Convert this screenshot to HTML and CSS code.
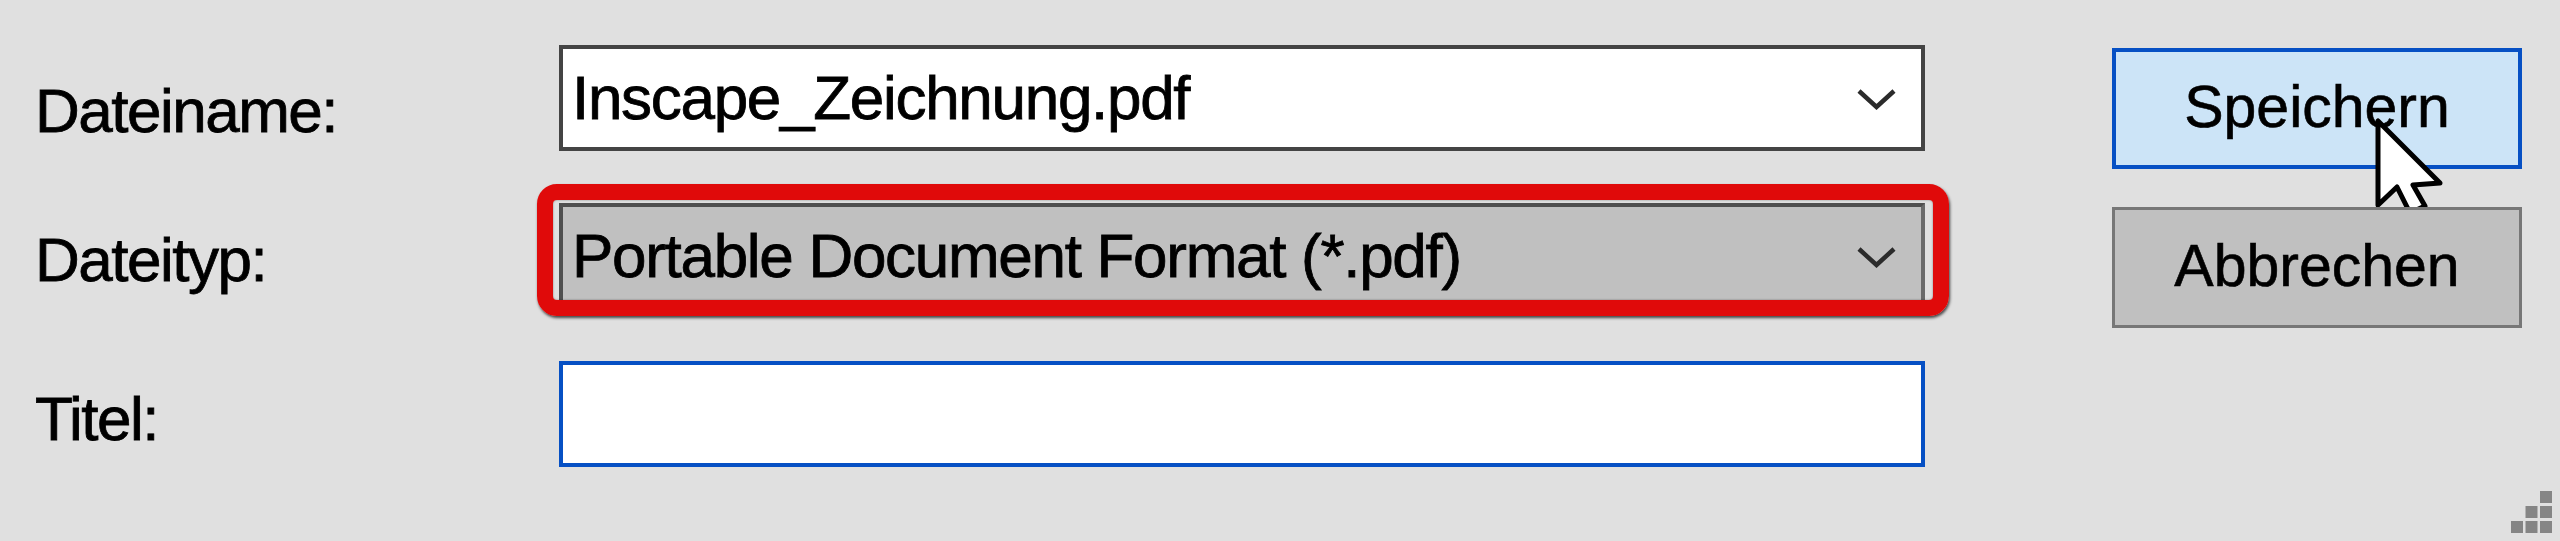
FILE: index.html
```html
<!DOCTYPE html>
<html lang="de">
<head>
<meta charset="utf-8">
<title>Speichern unter</title>
<link rel="stylesheet" href="styles.css">
</head>
<body>
<div class="dialog">
  <div class="form">
    <div class="label label-first">Dateiname:</div>
    <div class="field combo">
      <span class="value">Inscape_Zeichnung.pdf</span>
      <svg class="chev" viewBox="0 0 41 22" width="41" height="22"><polyline points="3,3 20.5,19 38,3" fill="none" stroke="#2b2b2b" stroke-width="4.5"/></svg>
    </div>
    <div class="label">Dateityp:</div>
    <div class="field combo select">
      <span class="value">Portable Document Format (*.pdf)</span>
      <svg class="chev" viewBox="0 0 41 22" width="41" height="22"><polyline points="3,3 20.5,19 38,3" fill="none" stroke="#2b2b2b" stroke-width="4.5"/></svg>
      <span class="ring"></span>
    </div>
    <div class="label label-last">Titel:</div>
    <div class="field text"></div>
  </div>
  <div class="side">
    <button class="btn primary">Speichern<svg class="cursor" viewBox="-4 -4 72 102" width="72" height="102"><polygon points="0,0 0,84 19,66 32,92 47,85 35,64 62,62" fill="#fff" stroke="#000" stroke-width="5" stroke-linejoin="round"/></svg></button>
    <button class="btn">Abbrechen</button>
    <svg class="grip" viewBox="0 0 43 43" width="43" height="43">
      <rect x="30" y="0" width="12" height="12" fill="#858585"/>
      <rect x="15.5" y="15" width="12" height="12" fill="#858585"/>
      <rect x="30" y="15" width="12" height="12" fill="#858585"/>
      <rect x="1" y="30" width="12" height="12" fill="#858585"/>
      <rect x="15.5" y="30" width="12" height="12" fill="#858585"/>
      <rect x="30" y="30" width="12" height="12" fill="#858585"/>
    </svg>
  </div>
</div>
</body>
</html>
```
FILE: styles.css
```css
html, body {
  margin: 0;
  padding: 0;
  background: #e0e0e0;
}

.dialog {
  display: flex;
  width: 2560px;
  height: 541px;
  font-family: "Liberation Sans", Arial, sans-serif;
  color: #000;
  overflow: hidden;
}

.form {
  display: grid;
  grid-template-columns: 524px 1366px;
  grid-auto-rows: 106px;
  row-gap: 52px;
  align-content: start;
  padding: 45px 0 0 35px;
}

.label {
  font-size: 62px;
  letter-spacing: -1.5px;
  line-height: 69px;
  padding-top: 22px;
  -webkit-text-stroke: 0.8px #000;
}

.label-first {
  padding-top: 31px;
}

.label-last {
  padding-top: 23px;
}

.field {
  position: relative;
  box-sizing: border-box;
  height: 106px;
  display: flex;
  align-items: flex-start;
  padding: 14px 0 0 9px;
  background: #fff;
  border: 4px solid #444;
}

.value {
  flex: 1;
  font-size: 62px;
  letter-spacing: -1.3px;
  line-height: 69px;
  white-space: nowrap;
  -webkit-text-stroke: 0.8px #000;
}

.chev {
  flex: none;
  margin-top: 25px;
  margin-right: 24px;
}

.select {
  background: #c0c0c0;
  border-color: #4f4f4f #6a6a6a #4f4f4f #4f4f4f;
}

.ring {
  position: absolute;
  top: -23px;
  left: -26px;
  right: -28px;
  bottom: -11px;
  border: 16px solid #e00a0a;
  border-radius: 20px;
  box-shadow: 1px 2px 3px rgba(0, 0, 0, 0.7), inset 0 0 2px rgba(0, 0, 0, 0.45);
  pointer-events: none;
}

.text {
  border-color: #0650c4;
}

.side {
  display: flex;
  flex-direction: column;
  margin-left: 187px;
  width: 448px;
  padding-top: 48px;
  box-sizing: border-box;
}

.btn {
  position: relative;
  box-sizing: border-box;
  width: 410px;
  height: 121px;
  margin: 0 0 38px 0;
  padding: 0 0 4px 0;
  font-family: "Liberation Sans", Arial, sans-serif;
  font-size: 59px;
  color: #000;
  -webkit-text-stroke: 0.6px #000;
  background: #c0c0c0;
  border: 3px solid #777;
  border-radius: 0;
  text-align: center;
}

.primary {
  background: #cce4f7;
  border: 4px solid #0650c4;
}

.cursor {
  position: absolute;
  left: 258px;
  top: 65px;
  overflow: visible;
}

.grip {
  margin-top: auto;
  align-self: flex-end;
  margin-right: 7px;
  margin-bottom: 7px;
}
```
